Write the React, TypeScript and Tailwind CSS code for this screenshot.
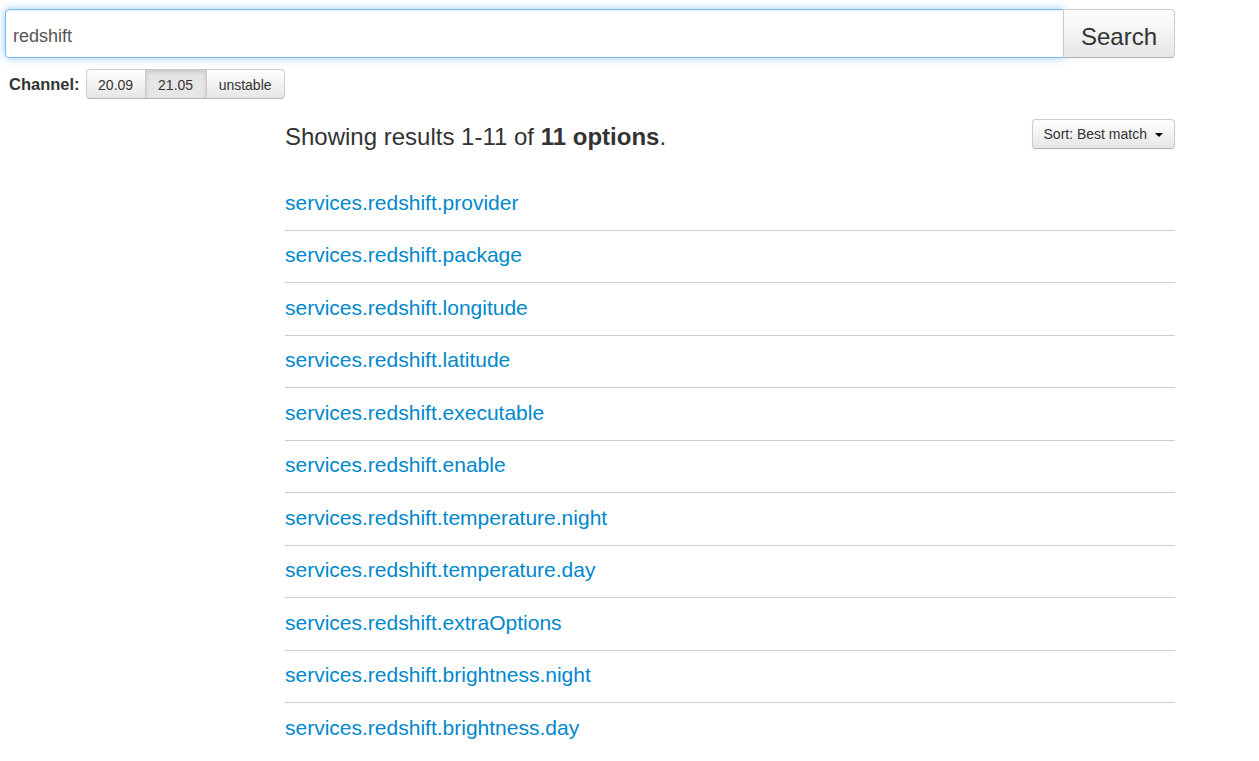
import React from 'react';

const options = [
    'services.redshift.provider',
    'services.redshift.package',
    'services.redshift.longitude',
    'services.redshift.latitude',
    'services.redshift.executable',
    'services.redshift.enable',
    'services.redshift.temperature.night',
    'services.redshift.temperature.day',
    'services.redshift.extraOptions',
    'services.redshift.brightness.night',
    'services.redshift.brightness.day',
];

const channels = ['20.09', '21.05', 'unstable'];

export default function App() {
    return (
        <div className="min-h-screen bg-white text-[#333] font-['Liberation_Sans',Arial,sans-serif] pl-[5px] w-[1175px]">
            {/* search bar */}
            <div className="flex pt-[9px]">
                <input
                    defaultValue="redshift"
                    className="flex-1 h-[49px] px-[7px] pt-[6px] text-[18px] text-[#555] border border-[rgba(82,168,236,0.8)] rounded-l-[4px] outline-none shadow-[inset_0_1px_1px_rgba(0,0,0,0.075),0_0_8px_rgba(82,168,236,0.6)]"
                />
                <button className="w-[112px] h-[49px] -ml-px pt-[7px] text-[24px] text-[#333] border border-[#ccc] border-b-[#b3b3b3] rounded-r-[4px] bg-gradient-to-b from-white to-[#e6e6e6] shadow-[inset_0_1px_0_rgba(255,255,255,0.2),0_1px_2px_rgba(0,0,0,0.05)]">
                    Search
                </button>
            </div>

            {/* channel selector */}
            <div className="flex items-center mt-[11px] pl-[4px]">
                <span className="text-[16.5px] font-bold mr-[6px]">Channel:</span>
                <div className="flex">
                    {channels.map((c, i) => (
                        <button
                            key={c}
                            className={
                                'h-[30px] pt-[2px] text-[14px] text-[#333] border border-[#ccc] border-b-[#b3b3b3] ' +
                                (i === 0 ? 'w-[60px] rounded-l-[4px] ' : '-ml-px ') +
                                (i === 1 ? 'w-[62px] bg-[#e6e6e6] shadow-[inset_0_2px_4px_rgba(0,0,0,0.15)] ' : 'bg-gradient-to-b from-white to-[#e6e6e6] ') +
                                (i === 2 ? 'w-[79px] rounded-r-[4px]' : '')
                            }
                        >
                            {c}
                        </button>
                    ))}
                </div>
            </div>

            {/* results */}
            <div className="flex">
                <div className="w-[280px] shrink-0" />
                <div className="flex-1">
                    <div className="flex justify-between items-start mt-[20px]">
                        <h2 className="text-[24px] leading-[30px] mt-[3px] font-normal">
                            Showing results 1-11 of <b>11 options</b>.
                        </h2>
                        <button className="flex items-center h-[30px] px-[11px] pt-[1px] text-[14px] text-[#333] border border-[#ccc] border-b-[#b3b3b3] rounded-[4px] bg-gradient-to-b from-white to-[#e6e6e6] shadow-[0_1px_2px_rgba(0,0,0,0.05)]">
                            Sort: Best match
                            <span className="ml-[8px] w-0 h-0 border-l-[4px] border-r-[4px] border-t-[4px] border-l-transparent border-r-transparent border-t-black" />
                        </button>
                    </div>
                    <ul className="mt-[26px]">
                        {options.map((o, i) => (
                            <li
                                key={o}
                                className={
                                    'pt-[9.5px] pb-[12px] ' +
                                    (i < options.length - 1 ? 'border-b border-[#ccc]' : '')
                                }
                            >
                                <a href="#" className="text-[21px] leading-[30px] text-[#0088cc]">
                                    {o}
                                </a>
                            </li>
                        ))}
                    </ul>
                </div>
            </div>
        </div>
    );
}
